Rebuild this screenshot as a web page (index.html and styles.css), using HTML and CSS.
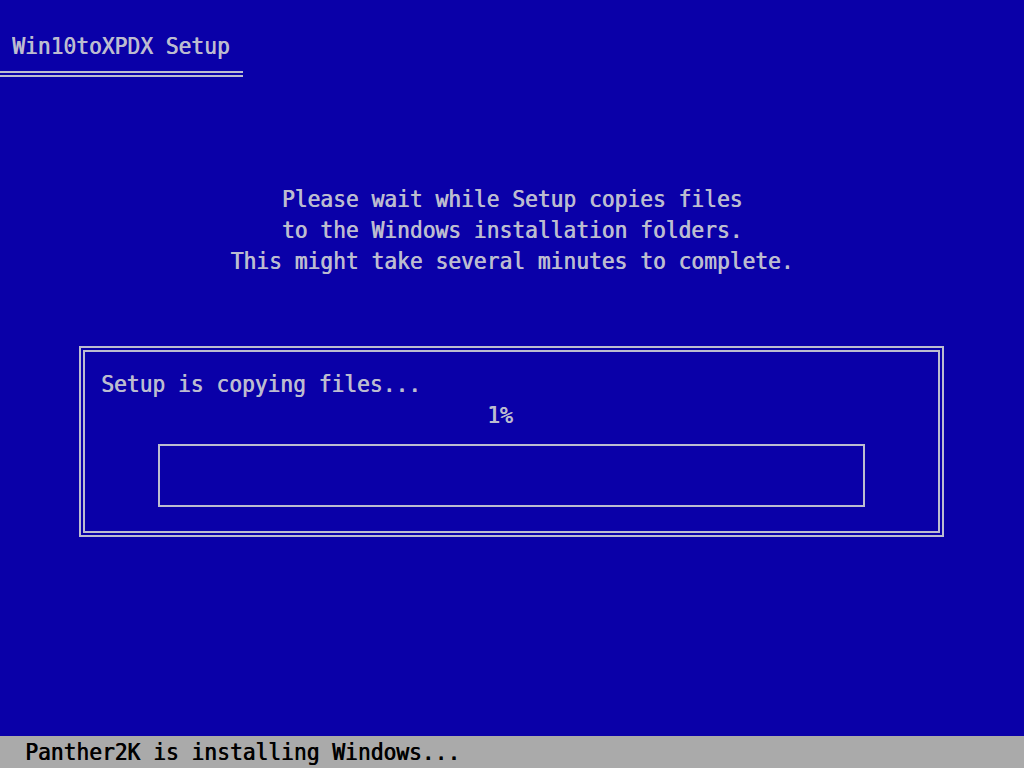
FILE: index.html
```html
<!DOCTYPE html>
<html lang="en">
<head>
  <meta charset="UTF-8">
  <meta name="viewport" content="width=device-width, initial-scale=1.0">
  <title>Win10toXPDX Setup</title>
  <link rel="stylesheet" href="styles.css">
</head>

<body>
  <div class="screen">
    <div class="header">
      <div class="line">Win10toXPDX Setup</div>
      <div class="underline"></div>
    </div>

    <div class="message">
      <div class="line">Please wait while Setup copies files</div>
      <div class="line">to the Windows installation folders.</div>
      <div class="line">This might take several minutes to complete.</div>
    </div>

    <div class="copy-box">
      <div class="line">Setup is copying files...</div>
      <div class="line percent">1%</div>
      <div class="progress">
        <div class="progress-fill" style="width: 1%"></div>
      </div>
    </div>

    <div class="status-bar">
      <div class="line">Panther2K is installing Windows...</div>
    </div>
  </div>
</body>
</html>
```

FILE: styles.css
```css
body {
  margin: 0;
  background: #0a00a8;
}

.screen {
  width: 1024px;
  height: 768px;
  display: flex;
  flex-direction: column;
  background: #0a00a8;
  color: #bcbcd0;
  font-family: "DejaVu Sans Mono", "Liberation Mono", monospace;
  font-size: 21.25px;
  line-height: 31px;
  overflow: hidden;
}

/* text mode glyphs are taller and heavier than a normal mono font */
.line {
  white-space: pre;
  transform: scaleY(1.1);
  text-shadow: 0.7px 0 0 currentColor;
}

.header {
  padding-top: 30px;
}

.header .line {
  padding-left: 12px;
}

.underline {
  width: 243px;
  height: 2px;
  margin-top: 10px;
  border-top: 2px solid #bcbcd0;
  border-bottom: 2px solid #bcbcd0;
}

.message {
  margin-top: 106px;
  text-align: center;
}

.copy-box {
  box-sizing: border-box;
  width: 865px;
  height: 191px;
  margin-top: 70px;
  margin-left: 79px;
  padding: 16px 0 0 16px;
  border: 6px double #bcbcd0;
}

.percent {
  padding-left: 386px;
}

.progress {
  box-sizing: border-box;
  width: 707px;
  height: 63px;
  margin-top: 14px;
  margin-left: 57px;
  border: 2px solid #bcbcd0;
}

.progress-fill {
  height: 100%;
  background: transparent;
}

.status-bar {
  margin-top: auto;
  height: 32px;
  padding-left: 25px;
  background: #aaaaaa;
  color: #000000;
  line-height: 32px;
}
```
